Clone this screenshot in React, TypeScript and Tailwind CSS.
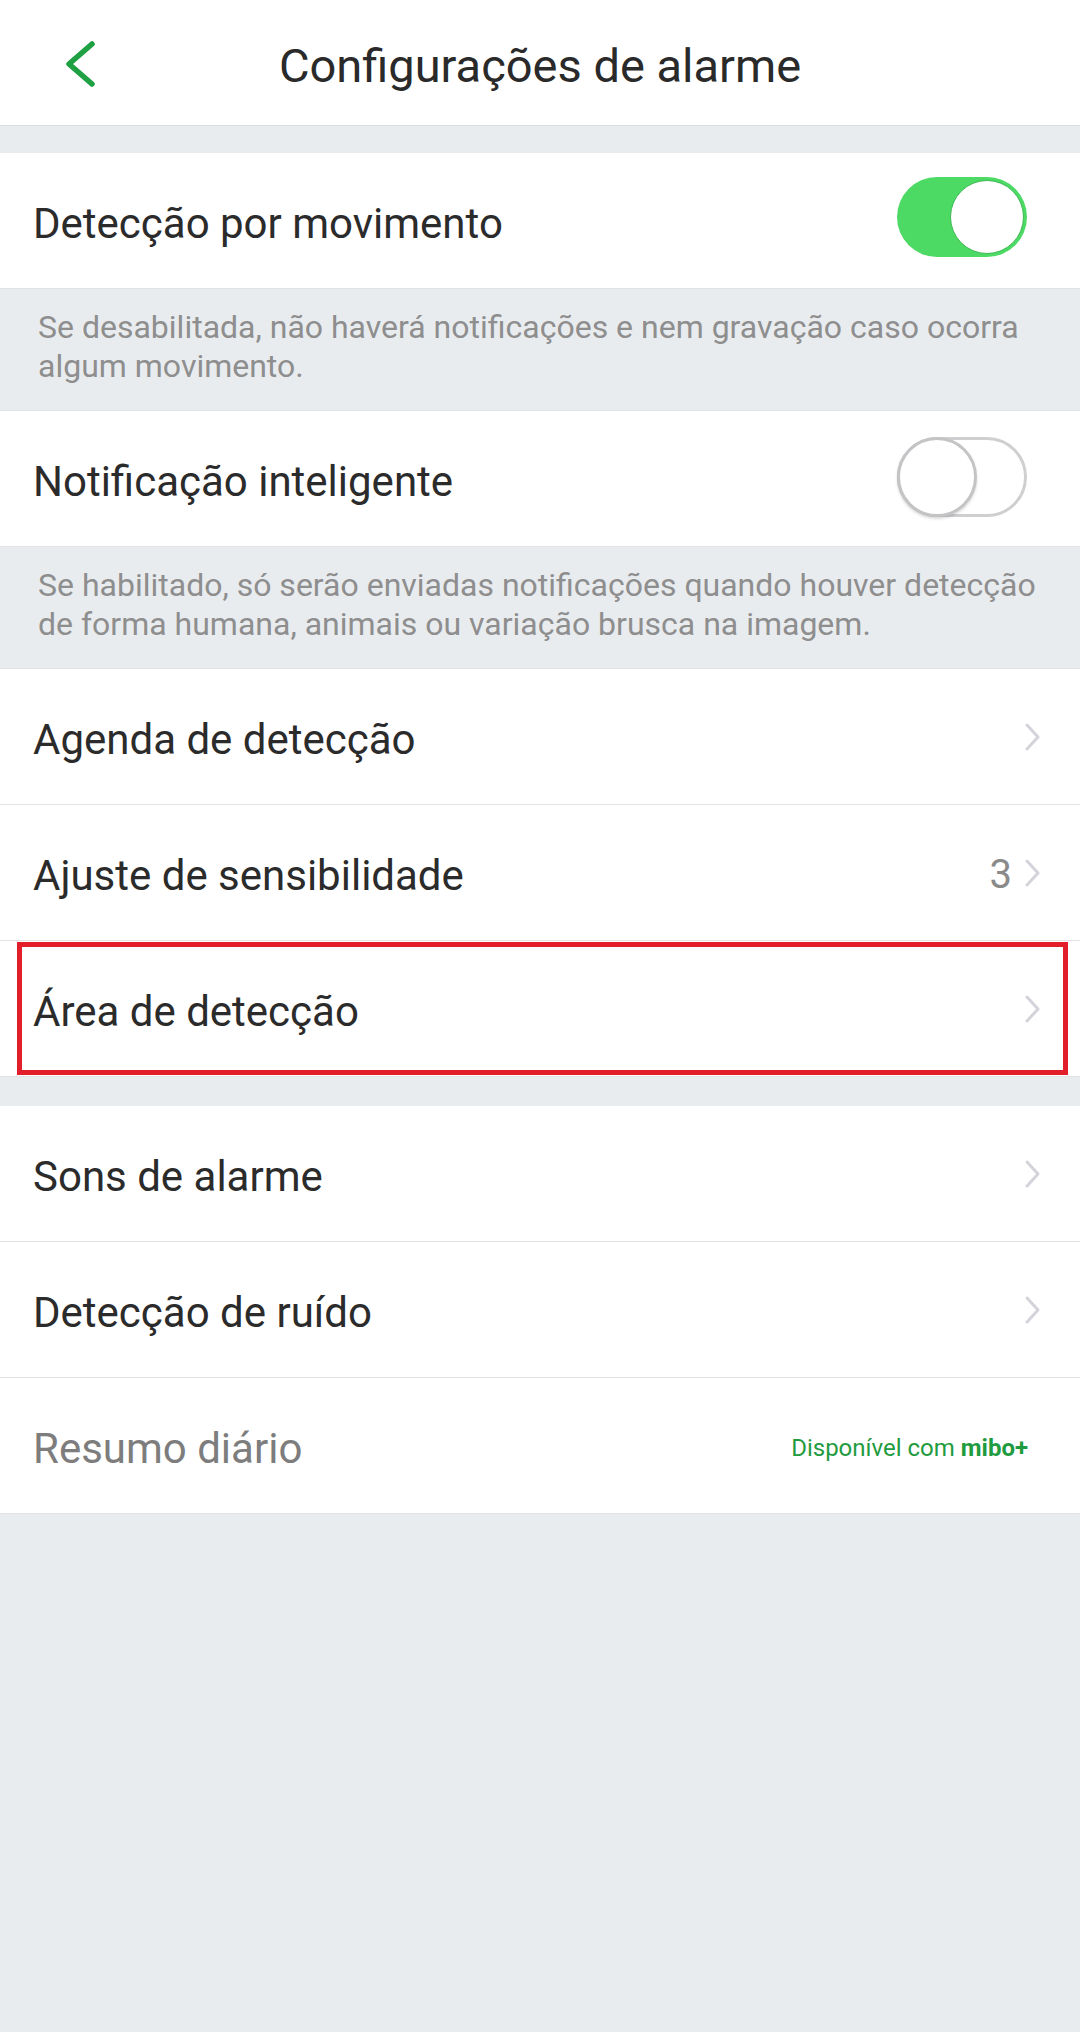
import React, { useState } from 'react';

const font = { fontFamily: "Roboto, 'Noto Sans', Arial, sans-serif" };

const Chevron = () => (
  <svg width="18" height="30" viewBox="0 0 18 30" fill="none" stroke="#d3d3da" strokeWidth="3" strokeLinecap="round" strokeLinejoin="round">
    <polyline points="3,3 14,15 3,27" />
  </svg>
);

const Toggle = ({ on, onClick }: { on: boolean; onClick: () => void }) =>
  on ? (
    <button onClick={onClick} className="relative w-[130px] h-[80px] rounded-full bg-[#4cd964]" aria-label="Desativar">
      <span className="absolute right-[3px] top-[3px] w-[74px] h-[74px] rounded-full bg-white border border-[#3fb955]" />
    </button>
  ) : (
    <button onClick={onClick} className="relative w-[130px] h-[80px] rounded-full bg-white border-[3px] border-[#cfcfd2]" aria-label="Ativar">
      <span className="absolute -left-[3px] -top-[3px] w-[80px] h-[80px] rounded-full bg-white border-[3px] border-[#c4c4c6] shadow-[0_2px_3px_rgba(0,0,0,0.15)]" />
    </button>
  );

const Row = ({ children, right }: { children: React.ReactNode; right?: React.ReactNode }) => (
  <div className="relative h-[136px] bg-white border-b border-[#e2e2e4] flex items-center justify-between pl-[33px] pr-[38px]">
    <div className="pt-[5px]">{children}</div>
    <div className="flex items-center gap-[12px]">{right ?? <Chevron />}</div>
  </div>
);

const Desc = ({ text }: { text: string }) => (
  <div className="bg-[#e9ecee] border-b border-[#e2e2e4] pl-[38px] pr-[30px] pt-[19px] pb-[24px] text-[32px] leading-[39px] text-[#8e8e8e]">
    {text}
  </div>
);

export default function App() {
  const [motion, setMotion] = useState(true);
  const [smart, setSmart] = useState(false);

  return (
    <div className="w-[1080px] min-h-[2032px] bg-[#e9ecee]" style={font}>
      {/* Header */}
      <div className="relative h-[126px] bg-white border-b border-[#dcdcdc] flex items-center justify-center">
        <button className="absolute left-[64px] top-[40px]" aria-label="Voltar">
          <svg width="34" height="48" viewBox="0 0 34 48" fill="none" stroke="#1ea043" strokeWidth="5.5" strokeLinecap="round" strokeLinejoin="round">
            <polyline points="28,4 5,24 28,44" />
          </svg>
        </button>
        <h1 className="mt-[5px] text-[47px] font-normal text-[#2a2a2a] leading-none">Configurações de alarme</h1>
      </div>

      <div className="h-[27px]" />

      <Row right={<div className="mr-[15px]"><Toggle on={motion} onClick={() => setMotion(!motion)} /></div>}>
        <span className="text-[42px] text-[#2b2b2b]">Detecção por movimento</span>
      </Row>
      <Desc text="Se desabilitada, não haverá notificações e nem gravação caso ocorra algum movimento." />

      <Row right={<div className="mr-[15px]"><Toggle on={smart} onClick={() => setSmart(!smart)} /></div>}>
        <span className="text-[42px] text-[#2b2b2b]">Notificação inteligente</span>
      </Row>
      <Desc text="Se habilitado, só serão enviadas notificações quando houver detecção de forma humana, animais ou variação brusca na imagem." />

      <Row>
        <span className="text-[42px] text-[#2b2b2b]">Agenda de detecção</span>
      </Row>
      <Row
        right={
          <>
            <span className="pt-[5px] text-[40px] text-[#8a8a8a]">3</span>
            <Chevron />
          </>
        }
      >
        <span className="text-[42px] text-[#2b2b2b]">Ajuste de sensibilidade</span>
      </Row>
      <Row>
        <span className="text-[42px] text-[#2b2b2b]">Área de detecção</span>
        <div className="absolute left-[17px] right-[12px] top-[1px] bottom-[1px] border-[5px] border-[#e31e2b] pointer-events-none" />
      </Row>

      <div className="h-[29px]" />

      <Row>
        <span className="text-[42px] text-[#2b2b2b]">Sons de alarme</span>
      </Row>
      <Row>
        <span className="text-[42px] text-[#2b2b2b]">Detecção de ruído</span>
      </Row>
      <Row
        right={
          <span className="pt-[5px] text-[24px] text-[#1f9b40] mr-[14px]">
            Disponível com <b className="font-bold">mibo+</b>
          </span>
        }
      >
        <span className="text-[42px] text-[#7d7d7d]">Resumo diário</span>
      </Row>
    </div>
  );
}
